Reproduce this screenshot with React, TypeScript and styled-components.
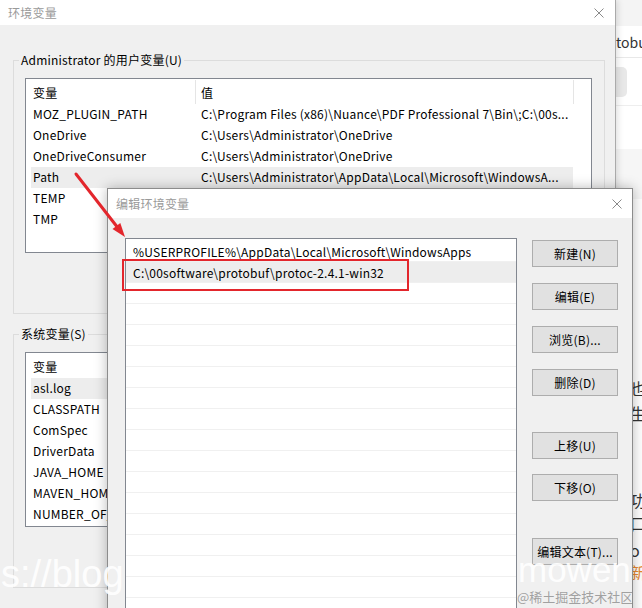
import React from 'react';
import styled, { createGlobalStyle } from 'styled-components';

const FONT = `"Noto Sans CJK SC", "Noto Sans", sans-serif`;

const GlobalStyle = createGlobalStyle`
  html, body { margin: 0; padding: 0; background: #fff; }
  body { font-family: ${FONT}; font-size: 12px; color: #000; }
  * { box-sizing: border-box; }
`;

const Desktop = styled.div`
  position: relative;
  width: 642px;
  height: 608px;
  overflow: hidden;
  display: flex;
  background: #fff;
  font-family: ${FONT};
  font-size: 12px;
  letter-spacing: 0.22px;
`;

/* ---------- outer window ---------- */
const OuterWindow = styled.div`
  position: relative;
  z-index: 1;
  flex: none;
  width: 616px;
  height: 100%;
  display: flex;
  flex-direction: column;
  background: #f0f0f0;
  border-right: 1px solid #aaaaaa;
  box-shadow: 2px 0 6px rgba(0, 0, 0, 0.12);
`;

const TitleBar = styled.div<{ $h: number; $pl: number; $pr: number }>`
  flex: none;
  height: ${(p) => p.$h}px;
  display: flex;
  align-items: center;
  justify-content: space-between;
  padding: 0 ${(p) => p.$pr}px 0 ${(p) => p.$pl}px;
  background: #fff;
`;

const TitleText = styled.span`
  font-size: 12px;
  line-height: 16px;
  color: #9a9a9a;
`;

const OuterBody = styled.div`
  flex: 1;
  display: flex;
  flex-direction: column;
  padding: 27px 10px 0 13px;
  gap: 12px;
`;

const GroupBox = styled.fieldset`
  margin: 0;
  border: 1px solid #dcdcdc;
  padding: 10px 12px 60px 11px;
  min-width: 0;
`;

const GroupLegend = styled.legend`
  margin-left: -6px;
  padding: 0 2px;
  font-size: 12px;
  line-height: 16px;
  color: #000;
`;

const ListView = styled.div`
  height: 175px;
  background: #fff;
  border: 1px solid #828790;
  overflow: hidden;
`;

const HeaderRow = styled.div`
  display: grid;
  grid-template-columns: 170px 378px 1fr;
  height: 25px;
`;

const HeaderCell = styled.div<{ $pl: number; $divider?: boolean }>`
  display: flex;
  align-items: center;
  padding-left: ${(p) => p.$pl}px;
  margin: 1px 0 0;
  border-right: ${(p) => (p.$divider ? '1px solid #e5e5e5' : 'none')};
  white-space: nowrap;
`;

const Row = styled.div<{ $selected?: boolean }>`
  display: grid;
  grid-template-columns: 164px 378px;
  width: 542px;
  height: 21px;
  margin-left: 5px;
  background: ${(p) => (p.$selected ? '#ededed' : 'transparent')};
`;

const Cell = styled.div<{ $pl: number }>`
  padding-left: ${(p) => p.$pl}px;
  line-height: 20px;
  white-space: nowrap;
  overflow: hidden;
`;

/* ---------- background page strip ---------- */
const PageStrip = styled.div`
  flex: 1;
  display: flex;
  flex-direction: column;
  background: #fff;
  overflow: hidden;
`;

const StripTop = styled.div`
  height: 26px;
  background: #f4f4f4;
`;

const StripText = styled.div`
  height: 32px;
  line-height: 32px;
  font-size: 14px;
  color: #333;
  letter-spacing: 0;
  white-space: nowrap;
  border-bottom: 1px solid #e8e8e8;
`;

const StripPill = styled.div`
  margin-top: 9px;
  width: 11px;
  height: 30px;
  border-radius: 0 5px 5px 0;
  background: #e8e8e8;
`;

const StripLine = styled.div`
  margin-top: 8px;
  height: 1px;
  background: #eeeeee;
`;

const StripBlock = styled.div`
  margin-top: 43px;
  height: 50px;
  background: #f6f6f6;
`;

const StripChar = styled.div<{ $mt: number; $color?: string }>`
  margin-top: ${(p) => p.$mt}px;
  padding-left: 14px;
  height: 22px;
  line-height: 22px;
  font-size: 16px;
  white-space: nowrap;
  color: ${(p) => p.$color || '#333'};
`;

/* ---------- inner window ---------- */
const InnerWindow = styled.div`
  position: absolute;
  z-index: 2;
  left: 107px;
  top: 188px;
  width: 526px;
  height: 440px;
  display: flex;
  flex-direction: column;
  background: #f0f0f0;
  border: 1px solid #8c8c8c;
  box-shadow: 0 0 12px rgba(0, 0, 0, 0.28);
`;

const InnerBody = styled.div`
  flex: 1;
  display: flex;
  gap: 15px;
  padding: 20px 14px 0 17px;
`;

const PathList = styled.div`
  width: 392px;
  height: 400px;
  padding-top: 2px;
  background: #fff;
  border: 1px solid #828790;
  overflow: hidden;
`;

const PathRow = styled.div<{ $selected?: boolean }>`
  height: 21px;
  line-height: 21px;
  padding-left: 7px;
  white-space: nowrap;
  border-bottom: 1px solid #f0f0f0;
  background: ${(p) => (p.$selected ? '#ededed' : '#fff')};
`;

const ButtonColumn = styled.div`
  display: flex;
  flex-direction: column;
  padding-top: 2px;
`;

const WinButton = styled.div<{ $mt: number }>`
  margin-top: ${(p) => p.$mt}px;
  width: 86px;
  height: 27px;
  display: flex;
  align-items: center;
  justify-content: center;
  background: #e1e1e1;
  border: 1px solid #adadad;
  font-size: 12px;
  color: #000;
`;

/* ---------- overlays ---------- */
const Highlight = styled.div`
  position: absolute;
  z-index: 3;
  left: 122px;
  top: 259px;
  width: 287px;
  height: 32px;
  border: 2px solid #e3262c;
`;

const ArrowSvg = styled.svg`
  position: absolute;
  z-index: 3;
  left: 0;
  top: 0;
  pointer-events: none;
`;

const Watermark = styled.div<{ $left: number; $top: number; $size: number }>`
  position: absolute;
  z-index: 4;
  left: ${(p) => p.$left}px;
  top: ${(p) => p.$top}px;
  font-family: "Liberation Sans", Arial, sans-serif;
  font-size: ${(p) => p.$size}px;
  line-height: 40px;
  letter-spacing: 0;
  color: rgba(255, 255, 255, 0.92);
  white-space: nowrap;
`;

const Credit = styled.div`
  position: absolute;
  z-index: 4;
  left: 517px;
  top: 589px;
  font-size: 13px;
  line-height: 16px;
  letter-spacing: 0;
  color: rgba(140, 140, 140, 0.8);
  white-space: nowrap;
`;

const CloseIcon = ({ size = 10 }: { size?: number }) => (
  <svg width={size} height={size} viewBox="0 0 10 10">
    <path d="M0.5 0.5 L9.5 9.5 M9.5 0.5 L0.5 9.5" stroke="#8a8a8a" strokeWidth="1" fill="none" />
  </svg>
);

type VarRow = [string, string];

const userVars: VarRow[] = [
  ['MOZ_PLUGIN_PATH', 'C:\\Program Files (x86)\\Nuance\\PDF Professional 7\\Bin\\;C:\\00s...'],
  ['OneDrive', 'C:\\Users\\Administrator\\OneDrive'],
  ['OneDriveConsumer', 'C:\\Users\\Administrator\\OneDrive'],
  ['Path', 'C:\\Users\\Administrator\\AppData\\Local\\Microsoft\\WindowsA...'],
  ['TEMP', 'C:\\Users\\Administrator\\AppData\\Local\\Temp'],
  ['TMP', 'C:\\Users\\Administrator\\AppData\\Local\\Temp'],
];

const systemVars: VarRow[] = [
  ['asl.log', 'Destination=file'],
  ['CLASSPATH', '.;%JAVA_HOME%\\lib;%JAVA_HOME%\\lib\\tools.jar'],
  ['ComSpec', 'C:\\Windows\\system32\\cmd.exe'],
  ['DriverData', 'C:\\Windows\\System32\\Drivers\\DriverData'],
  ['JAVA_HOME', 'C:\\Program Files\\Java\\jdk1.8.0_201'],
  ['MAVEN_HOME', 'C:\\00software\\apache-maven-3.6.1'],
  ['NUMBER_OF_PROCESSORS', '8'],
];

const paths = [
  '%USERPROFILE%\\AppData\\Local\\Microsoft\\WindowsApps',
  'C:\\00software\\protobuf\\protoc-2.4.1-win32',
];

const buttons: [string, number][] = [
  ['新建(N)', 0],
  ['编辑(E)', 16],
  ['浏览(B)...', 16],
  ['删除(D)', 16],
  ['上移(U)', 36],
  ['下移(O)', 15],
  ['编辑文本(T)...', 37],
];

const VarList = ({ rows, selected }: { rows: VarRow[]; selected: number }) => (
  <ListView>
    <HeaderRow>
      <HeaderCell $pl={7} $divider>变量</HeaderCell>
      <HeaderCell $pl={5} $divider>值</HeaderCell>
      <HeaderCell $pl={0} />
    </HeaderRow>
    {rows.map(([name, value], i) => (
      <Row key={name} $selected={i === selected}>
        <Cell $pl={2}>{name}</Cell>
        <Cell $pl={6}>{value}</Cell>
      </Row>
    ))}
  </ListView>
);

export default function App() {
  const emptyRows = Array.from({ length: 18 });
  return (
    <>
      <GlobalStyle />
      <Desktop>
        <OuterWindow>
          <TitleBar $h={25} $pl={8} $pr={11}>
            <TitleText>环境变量</TitleText>
            <CloseIcon />
          </TitleBar>
          <OuterBody>
            <GroupBox>
              <GroupLegend>Administrator 的用户变量(U)</GroupLegend>
              <VarList rows={userVars} selected={3} />
            </GroupBox>
            <GroupBox>
              <GroupLegend>系统变量(S)</GroupLegend>
              <VarList rows={systemVars} selected={0} />
            </GroupBox>
          </OuterBody>
        </OuterWindow>

        <PageStrip>
          <StripTop />
          <StripText>tobuf</StripText>
          <StripPill />
          <StripLine />
          <StripBlock />
          <StripChar $mt={178}>也</StripChar>
          <StripChar $mt={3}>生</StripChar>
          <StripChar $mt={65}>功</StripChar>
          <StripChar $mt={1}>口</StripChar>
          <StripChar $mt={5}>o</StripChar>
          <StripChar $mt={0} $color="#e8892f">新</StripChar>
        </PageStrip>

        <InnerWindow>
          <TitleBar $h={29} $pl={8} $pr={10}>
            <TitleText>编辑环境变量</TitleText>
            <CloseIcon />
          </TitleBar>
          <InnerBody>
            <PathList>
              {paths.map((p, i) => (
                <PathRow key={p} $selected={i === 1}>{p}</PathRow>
              ))}
              {emptyRows.map((_, i) => (
                <PathRow key={`e${i}`} />
              ))}
            </PathList>
            <ButtonColumn>
              {buttons.map(([label, mt]) => (
                <WinButton key={label} $mt={mt}>{label}</WinButton>
              ))}
            </ButtonColumn>
          </InnerBody>
        </InnerWindow>

        <Highlight />
        <ArrowSvg width={642} height={608} viewBox="0 0 642 608">
          <line x1="76" y1="174" x2="118" y2="228" stroke="#e3262c" strokeWidth="3" strokeLinecap="round" />
          <polygon points="125,237 112.5,229.1 120.3,222.9" fill="#e3262c" />
        </ArrowSvg>

        <Watermark $left={1} $top={554} $size={38}>s://blog</Watermark>
        <Watermark $left={518} $top={550} $size={35}>mowen</Watermark>
        <Credit>@稀土掘金技术社区</Credit>
      </Desktop>
    </>
  );
}
